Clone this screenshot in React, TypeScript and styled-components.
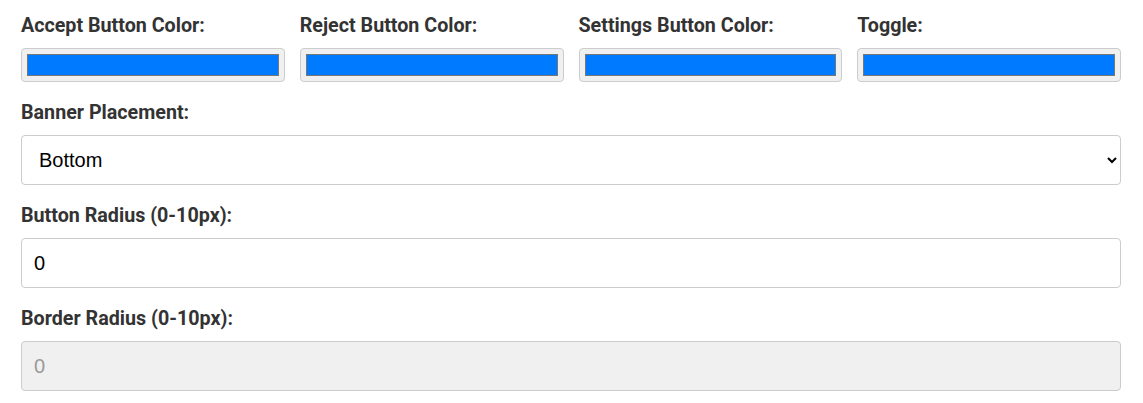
import React, { useState } from "react";
import styled, { createGlobalStyle } from "styled-components";

const GlobalStyle = createGlobalStyle`
  html, body {
    margin: 0;
    padding: 0;
    background: #ffffff;
  }
  body {
    font-family: Roboto, "Liberation Sans", Arial, sans-serif;
  }
  * { box-sizing: border-box; }
`;

const Page = styled.div`
  padding: 14px 22px 0 21px;
  width: 1143px;
`;

const ColorGrid = styled.div`
  display: grid;
  grid-template-columns: repeat(4, 1fr);
  column-gap: 15px;
  margin-bottom: 19px;
`;

const Field = styled.div`
  display: flex;
  flex-direction: column;
  margin-bottom: 19px;
`;

const ColorField = styled.div`
  display: flex;
  flex-direction: column;
`;

const Label = styled.label`
  display: block;
  font-family: Roboto, "Liberation Sans", Arial, sans-serif;
  font-weight: 700;
  font-size: 19.7px;
  line-height: 24px;
  color: #333333;
  margin-bottom: 10px;
  white-space: nowrap;
`;

const ColorInput = styled.input`
  width: 100%;
  height: 34px;
  border: 1px solid #cccccc;
  border-radius: 4px;
  background: #f0f0f0;
  padding: 1px 2px;
  margin: 0;
  cursor: pointer;
  &::-webkit-color-swatch-wrapper {
    padding: 4px 3px;
  }
  &::-webkit-color-swatch {
    border: 1px solid #777777;
    border-radius: 0;
  }
`;

const Select = styled.select`
  width: 100%;
  height: 50px;
  border: 1px solid #cccccc;
  border-radius: 4px;
  background: #ffffff;
  padding: 0 12px 0 13px;
  font-family: "Liberation Sans", Arial, sans-serif;
  font-size: 20px;
  color: #000000;
  margin: 0;
`;

const TextInput = styled.input<{ $disabled?: boolean }>`
  width: 100%;
  height: 50px;
  border: 1px solid #cccccc;
  border-radius: 4px;
  background: ${(p) => (p.$disabled ? "#f0f0f0" : "#ffffff")};
  color: ${(p) => (p.$disabled ? "#9a9a9a" : "#000000")};
  padding: 0 12px;
  font-family: "Liberation Sans", Arial, sans-serif;
  font-size: 20px;
  margin: 0;
`;

const colorFields = [
  { id: "accept", label: "Accept Button Color:" },
  { id: "reject", label: "Reject Button Color:" },
  { id: "settings", label: "Settings Button Color:" },
  { id: "toggle", label: "Toggle:" },
];

export default function App() {
  const [colors, setColors] = useState<Record<string, string>>({
    accept: "#007bff",
    reject: "#007bff",
    settings: "#007bff",
    toggle: "#007bff",
  });
  const [placement, setPlacement] = useState("bottom");
  const [buttonRadius, setButtonRadius] = useState("0");

  return (
    <>
      <GlobalStyle />
      <Page>
        <ColorGrid>
          {colorFields.map((f) => (
            <ColorField key={f.id}>
              <Label htmlFor={f.id}>{f.label}</Label>
              <ColorInput
                id={f.id}
                type="color"
                value={colors[f.id]}
                onChange={(e) => setColors({ ...colors, [f.id]: e.target.value })}
              />
            </ColorField>
          ))}
        </ColorGrid>
        <Field>
          <Label htmlFor="placement">Banner Placement:</Label>
          <Select id="placement" value={placement} onChange={(e) => setPlacement(e.target.value)}>
            <option value="bottom">Bottom</option>
            <option value="top">Top</option>
          </Select>
        </Field>
        <Field>
          <Label htmlFor="btnRadius">Button Radius (0-10px):</Label>
          <TextInput
            id="btnRadius"
            type="number"
            value={buttonRadius}
            onChange={(e) => setButtonRadius(e.target.value)}
          />
        </Field>
        <Field>
          <Label htmlFor="borderRadius">Border Radius (0-10px):</Label>
          <TextInput id="borderRadius" type="number" value="0" disabled $disabled readOnly />
        </Field>
      </Page>
    </>
  );
}
